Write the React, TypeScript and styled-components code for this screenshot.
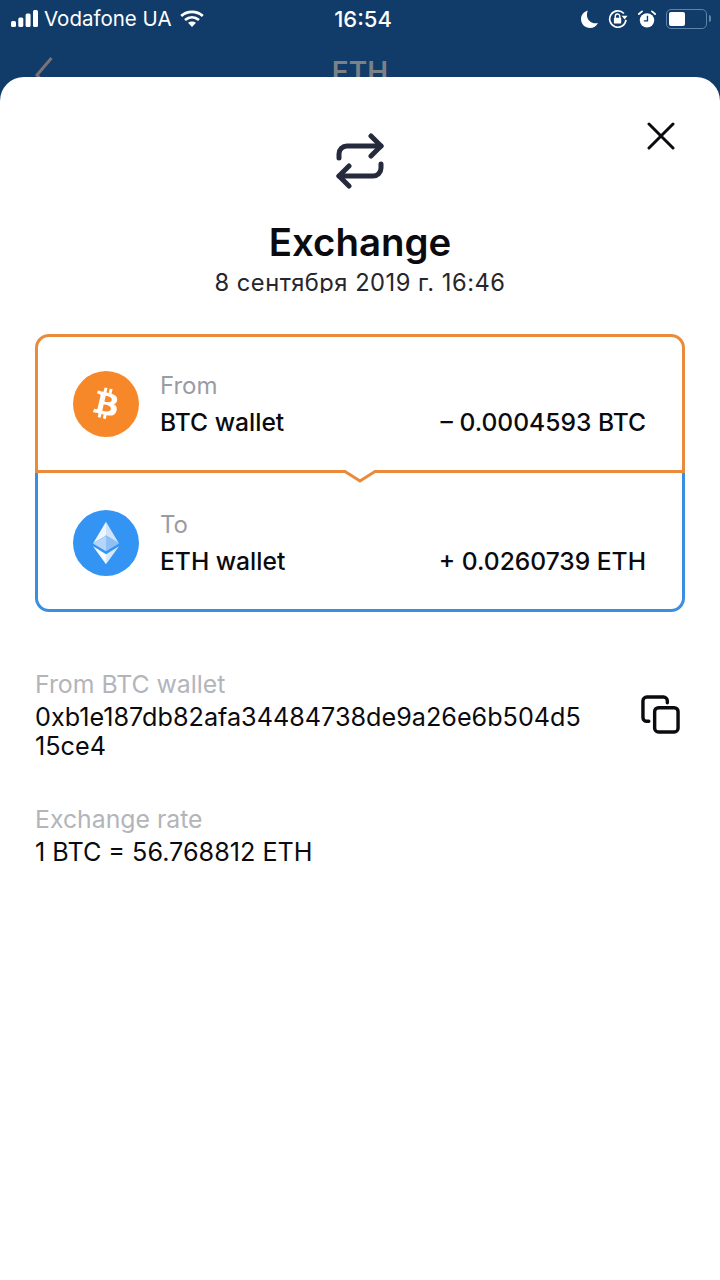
import React from 'react';
import styled, { createGlobalStyle } from 'styled-components';
import { FaBtc } from 'react-icons/fa';

const GlobalStyle = createGlobalStyle`
    html, body {
        margin: 0;
        padding: 0;
        background: #fff;
    }
    * {
        box-sizing: border-box;
    }
`;

export default function App() {
    return <Screen>
        <GlobalStyle />
        <TopArea>
            <StatusBar>
                <StatusLeft>
                    <SignalIcon />
                    <Carrier>Vodafone UA</Carrier>
                    <WifiIcon />
                </StatusLeft>
                <Clock>16:54</Clock>
                <StatusRight>
                    <MoonIcon />
                    <LockIcon />
                    <AlarmIcon />
                    <BatteryWrap>
                        <Battery><BatteryFill /></Battery>
                        <BatteryCap />
                    </BatteryWrap>
                </StatusRight>
            </StatusBar>
            <NavBar>
                <BackIcon />
                <NavTitle>ETH</NavTitle>
            </NavBar>
        </TopArea>
        <Sheet>
            <CloseButton><CloseIcon /></CloseButton>
            <HeroIcon><ExchangeIcon /></HeroIcon>
            <Title>Exchange</Title>
            <DateLine>8 сентября 2019 г. 16:46</DateLine>
            <Card>
                <Leg $color="#e98b3a" $closed="top">
                    <CoinCircle $color="#f7882a"><BitcoinGlyph size={31} color="#fff" /></CoinCircle>
                    <LegText>
                        <LegLabel>From</LegLabel>
                        <LegRow>
                            <span>BTC wallet</span>
                            <span>– 0.0004593 BTC</span>
                        </LegRow>
                    </LegText>
                    <Notch />
                </Leg>
                <Leg $color="#3a8fe0" $closed="bottom">
                    <CoinCircle $color="#3394f3"><EthereumGlyph /></CoinCircle>
                    <LegText>
                        <LegLabel>To</LegLabel>
                        <LegRow>
                            <span>ETH wallet</span>
                            <span>+ 0.0260739 ETH</span>
                        </LegRow>
                    </LegText>
                </Leg>
            </Card>
            <Details>
                <DetailRow>
                    <DetailText>
                        <DetailLabel>From BTC wallet</DetailLabel>
                        <DetailValue>0xb1e187db82afa34484738de9a26e6b504d5<br />15ce4</DetailValue>
                    </DetailText>
                    <CopyButton><CopyIcon /></CopyButton>
                </DetailRow>
                <DetailRow>
                    <DetailText>
                        <DetailLabel>Exchange rate</DetailLabel>
                        <DetailValue>1 BTC = 56.768812 ETH</DetailValue>
                    </DetailText>
                </DetailRow>
            </Details>
        </Sheet>
    </Screen>;
}

const SignalIcon = () => <svg width="27" height="17" viewBox="0 0 27 17" fill="#fff">
    <rect x="0" y="11" width="5" height="6" rx="1.5" />
    <rect x="7.300" y="7.500" width="5" height="9.500" rx="1.5" />
    <rect x="14.600" y="3.500" width="5" height="13.500" rx="1.5" />
    <rect x="22" y="0" width="5" height="17" rx="1.5" />
</svg>;

const WifiIcon = () => <svg width="24" height="17" viewBox="0 0 24 17" fill="none" stroke="#fff" strokeWidth="2.800">
    <path d="M1.200 6C7.500.5 16.500.5 22.800 6" />
    <path d="M5 10c4.200-3.500 9.800-3.500 14 0" />
    <path d="M12 17 8 12.800c2.400-1.800 5.600-1.800 8 0z" fill="#fff" stroke="none" />
</svg>;

const MoonIcon = () => <svg width="17" height="18" viewBox="0 0 17 18" fill="#fff">
    <path d="M7 0.500C3 1.500 0 4.800 0 9c0 5 4 9 9 9 3.500 0 6.500-2 8-5-5 1.500-10.500-2-11-7-.2-2.200.2-4.200 1-6z" />
</svg>;

const LockIcon = () => <svg width="20" height="20" viewBox="0 0 22 22" fill="none">
    <path d="M17.500 5A9 9 0 1 0 19.800 12" stroke="#fff" strokeWidth="1.800" />
    <path d="M15.500 8.500h6.500l-3.200 4z" fill="#fff" transform="translate(-.5 -1)" />
    <rect x="6.500" y="9.500" width="8" height="6.500" rx="1" fill="#fff" />
    <path d="M8 10V8a2.500 2.500 0 0 1 5 0v2" stroke="#fff" strokeWidth="1.500" />
</svg>;

const AlarmIcon = () => <svg width="18" height="18" viewBox="0 0 20 20" fill="none">
    <circle cx="10" cy="11.500" r="8" fill="#fff" />
    <path d="M10.500 6.500v5.500H6.500" stroke="#113b68" strokeWidth="1.500" />
    <path d="M1 4.500 4.500 1.500M19 4.500 15.500 1.500" stroke="#fff" strokeWidth="2" strokeLinecap="round" />
</svg>;

const BackIcon = () => <svg width="18" height="36" viewBox="0 0 18 36" fill="none" stroke="#7a7277" strokeWidth="3">
    <path d="M16.500 1 2 18l14.500 17" />
</svg>;

const CloseIcon = () => <svg width="28" height="28" viewBox="0 0 28 28" fill="none" stroke="#0b0b0f" strokeWidth="3" strokeLinecap="round">
    <path d="M2 2 26 26M26 2 2 26" />
</svg>;

const ExchangeIcon = () => <svg width="48" height="56" viewBox="0 0 48 56" fill="none" stroke="#252a3c" strokeWidth="5" strokeLinecap="round" strokeLinejoin="round">
    <path d="M3 25v-4a8 8 0 0 1 8-8h34" />
    <path d="M35 3 45 13 35 23" />
    <path d="M45 31v4a8 8 0 0 1-8 8H3" />
    <path d="M13 33 3 43 13 53" />
</svg>;

const EthereumGlyph = () => <svg width="26" height="44" viewBox="0 0 28 46">
    <path d="M14 0 0 23.500 14 15z" fill="#eef5fe" />
    <path d="M14 0 28 23.500 14 15z" fill="#cfe3fb" />
    <path d="M14 15 0 23.500 14 32z" fill="#b5d5f9" />
    <path d="M14 15 28 23.500 14 32z" fill="#8fc0f5" />
    <path d="M0 26.500 14 46V35z" fill="#f7fbff" />
    <path d="M28 26.500 14 46V35z" fill="#d5e8fc" />
</svg>;

const CopyIcon = () => <svg width="39" height="39" viewBox="0 0 40 40" fill="none" stroke="#0b0b0f" strokeWidth="3.500" strokeLinecap="round" strokeLinejoin="round">
    <rect x="14" y="13" width="24" height="25" rx="4" />
    <path d="M8 27H6a4 4 0 0 1-4-4V6a4 4 0 0 1 4-4h17a4 4 0 0 1 4 4v2" />
</svg>;

const NotchShape = () => <svg width="34" height="16" viewBox="0 0 34 16" fill="none">
    <path d="M2 0H32V1.500L17 11 2 1.500z" fill="#fff" />
    <path d="M0 1.500h2L17 11 32 1.500h2" stroke="#e98b3a" strokeWidth="3" />
</svg>;

const Notch = () => <NotchWrap><NotchShape /></NotchWrap>;

const BitcoinGlyph = styled(FaBtc)`
    transform: rotate(13deg);
`;

const Screen = styled.div`
    width: 720px;
    height: 1280px;
    overflow: hidden;
    background: #113b68;
    color: #0b0b0f;
    font-family: Inter, "Noto Sans", sans-serif;
`;

const TopArea = styled.header`
    height: 77px;
    overflow: hidden;
`;

const StatusBar = styled.div`
    height: 37px;
    padding: 0 5px 0 11px;
    display: grid;
    grid-template-columns: 1fr auto 1fr;
    align-items: center;
    color: #fff;
`;

const StatusLeft = styled.div`
    display: flex;
    align-items: center;
    gap: 6px;
`;

const Carrier = styled.span`
    font-size: 20.5px;
    margin-right: 2px;
`;

const Clock = styled.span`
    font-size: 22px;
    font-weight: 500;
`;

const StatusRight = styled.div`
    display: flex;
    align-items: center;
    justify-content: flex-end;
    gap: 10px;
    margin-right: 4px;
`;

const BatteryWrap = styled.div`
    display: flex;
    align-items: center;
    gap: 2px;
`;

const Battery = styled.div`
    width: 41px;
    height: 20px;
    padding: 2px;
    border: 1.5px solid #5f84ab;
    border-radius: 5px;
`;

const BatteryFill = styled.div`
    width: 16px;
    height: 100%;
    background: #fff;
    border-radius: 2px;
`;

const BatteryCap = styled.div`
    width: 2px;
    height: 7px;
    background: #5f84ab;
    border-radius: 0 2px 2px 0;
`;

const NavBar = styled.div`
    height: 40px;
    padding: 20px 35px 0;
    display: grid;
    grid-template-columns: 1fr auto 1fr;
    align-items: start;
`;

const NavTitle = styled.span`
    font-size: 28px;
    font-weight: 600;
    line-height: 30px;
    color: #7b8186;
`;

const Sheet = styled.main`
    position: relative;
    height: 1203px;
    padding: 56px 35px 0;
    background: #fff;
    border-radius: 24px 24px 0 0;
`;

const CloseButton = styled.div`
    position: absolute;
    top: 45px;
    right: 45px;
    display: flex;
`;

const HeroIcon = styled.div`
    display: flex;
    justify-content: center;
`;

const Title = styled.h1`
    margin: 30px 0 0;
    text-align: center;
    font-size: 38.4px;
    line-height: 46px;
    font-weight: 600;
`;

const DateLine = styled.div`
    margin-top: 4px;
    height: 24px;
    overflow: hidden;
    text-align: center;
    font-size: 23.7px;
    line-height: 28px;
    letter-spacing: 0.5px;
    color: #26262c;
`;

const Card = styled.section`
    margin-top: 41px;
    display: flex;
    flex-direction: column;
`;

const Leg = styled.div<{ $color: string; $closed: 'top' | 'bottom' }>`
    position: relative;
    height: 139px;
    display: flex;
    align-items: center;
    gap: 21px;
    padding: ${p => p.$closed === 'top' ? 0 : 3}px 36px 0 35px;
    border: 3px solid ${p => p.$color};
    border-top-width: ${p => p.$closed === 'top' ? 3 : 0}px;
    border-radius: ${p => p.$closed === 'top' ? '14px 14px 0 0' : '0 0 14px 14px'};
`;

const CoinCircle = styled.div<{ $color: string }>`
    width: 66px;
    height: 66px;
    flex: none;
    display: flex;
    align-items: center;
    justify-content: center;
    border-radius: 50%;
    background: ${p => p.$color};
`;

const LegText = styled.div`
    flex: 1;
    min-width: 0;
`;

const LegLabel = styled.div`
    font-size: 24px;
    line-height: 37px;
    color: #9a9ca4;
`;

const LegRow = styled.div`
    display: flex;
    justify-content: space-between;
    font-size: 24.6px;
    line-height: 36px;
    font-weight: 500;
`;

const NotchWrap = styled.div`
    position: absolute;
    left: 305px;
    bottom: -16px;
    z-index: 1;
    display: flex;
`;

const Details = styled.section`
    margin-top: 54px;
    display: flex;
    flex-direction: column;
    gap: 40px;
`;

const DetailRow = styled.div`
    display: flex;
    justify-content: space-between;
    align-items: flex-start;
`;

const DetailText = styled.div`
    min-width: 0;
`;

const DetailLabel = styled.div`
    font-size: 24.8px;
    line-height: 37px;
    color: #b3b5ba;
`;

const DetailValue = styled.div`
    font-size: 25.2px;
    line-height: 29px;
`;

const CopyButton = styled.div`
    display: flex;
    margin: 29px 5px 0 0;
`;
